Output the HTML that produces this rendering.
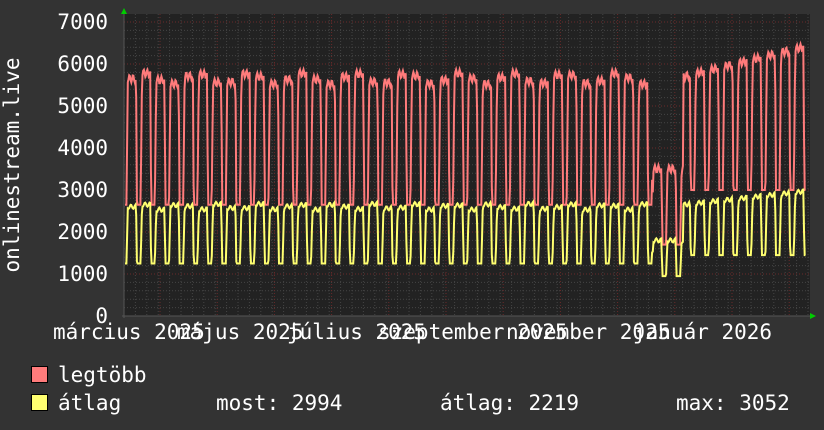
<!DOCTYPE html>
<html><head><meta charset="utf-8"><style>
html,body{margin:0;padding:0;background:#333;}
svg{display:block}
text{font-family:"DejaVu Sans Mono","Liberation Mono",monospace;font-size:21px;fill:#fff}
</style></head><body>
<svg id="s" width="824" height="430" xmlns="http://www.w3.org/2000/svg">
<rect width="824" height="430" fill="#333"/>
<rect x="124" y="14" width="686" height="302" fill="#222"/>
<g id="grid"></g>
<polyline id="red" fill="none" stroke="#ff7b7b" stroke-width="2"/>
<polyline id="yel" fill="none" stroke="#ffff70" stroke-width="2"/>
<line x1="124" y1="12" x2="124" y2="318" stroke="#555"/>
<line x1="122" y1="316" x2="812" y2="316" stroke="#555"/>
<polygon points="121,14 127,14 124,8" fill="#0c0"/>
<polygon points="810,313 810,319 816,316" fill="#0c0"/>
<g text-anchor="end">
<text x="108" y="29">7000</text><text x="108" y="71">6000</text><text x="108" y="113">5000</text>
<text x="108" y="155">4000</text><text x="108" y="197">3000</text><text x="108" y="239">2000</text>
<text x="108" y="281">1000</text><text x="108" y="323">0</text>
</g>
<text transform="translate(19,165) rotate(-90)" text-anchor="middle">onlinestream.live</text>
<text x="53" y="339">március 2025</text>
<text x="177" y="339">május 2025</text>
<text x="287" y="339">július 2025</text>
<text x="378" y="339">szeptember 2025</text>
<text x="506" y="339">november 2025</text>
<text x="633" y="339">január 2026</text>
<rect x="31.5" y="366.5" width="16" height="16" fill="#ff7b7b" stroke="#000"/>
<rect x="31.5" y="394.5" width="16" height="16" fill="#ffff70" stroke="#000"/>
<text x="58" y="382">legtöbb</text>
<text x="58" y="410">átlag</text>
<text x="216" y="410">most: 2994</text>
<text x="440" y="410">átlag: 2219</text>
<text x="676" y="410">max: 3052</text>
</svg>
<script>
var ns="http://www.w3.org/2000/svg",g=document.getElementById('grid');
function ln(x1,y1,x2,y2,c){var l=document.createElementNS(ns,'line');l.setAttribute('x1',x1);l.setAttribute('y1',y1);l.setAttribute('x2',x2);l.setAttribute('y2',y2);l.setAttribute('stroke',c);l.setAttribute('stroke-dasharray','1,2');g.appendChild(l);}
for(var y=316;y>14;y-=8.4){ln(124,y,810,y,'#444');}
for(var x=124;x<810;x+=11.4){ln(x,14,x,316,'#444');}
for(var v=0;v<=7;v++){ln(124,316-v*42,810,316-v*42,'#6a2a2a');}
for(var x=160;x<810;x+=57.2){ln(x,14,x,316,'#6a2a2a');}
function Y(v){return 316-v*0.042;}
var r=[],yl=[],P=14.2;
for(var x=125;x<=806;x+=0.7){
 var ph=((x-125)%P)/P, wk=Math.floor((x-125)/P);
 var t=(x-125)/681;
 var hi=5650+Math.sin(wk*1.7)*130, lo=2650, yh=2600+Math.sin(wk*2.3)*70, ylo=1250;
 if(t>0.82){hi=5700+(t-0.82)*4000;yh=2650+(t-0.82)*1800;lo=3000;ylo=1450;}
 if(t>0.775&&t<0.82){hi=3500;lo=1700;yh=1800;ylo=950;}
 var up=ph>0.2&&ph<0.78;
 var ramp=ph<0.2?(ph<0.1?0:(ph-0.1)/0.1):(ph>0.78?Math.max(0,1-(ph-0.78)/0.06):1);
 var vr=lo+(hi-lo)*ramp+(up?Math.sin(ph*25)*90:0);
 var vy=ylo+(yh-ylo)*ramp+(up?Math.sin(ph*19)*50:0);
 r.push(x.toFixed(1)+','+Y(vr).toFixed(1));yl.push(x.toFixed(1)+','+Y(vy).toFixed(1));
}
document.getElementById('red').setAttribute('points',r.join(' '));
document.getElementById('yel').setAttribute('points',yl.join(' '));
</script>
</body></html>
